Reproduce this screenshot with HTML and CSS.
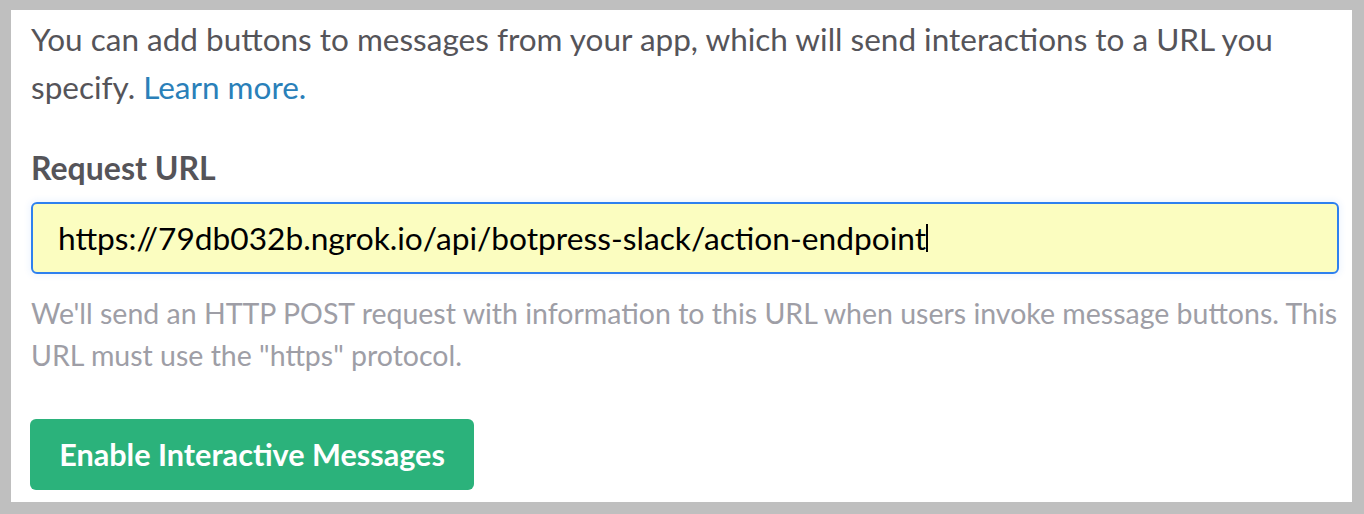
FILE: index.html
```html
<!DOCTYPE html>
<html>
<head>
<meta charset="utf-8">
<link rel="stylesheet" href="styles.css">
</head>
<body>
<div class="panel">
  <p class="intro">You can add buttons to messages from your app, which will send interactions to a URL you specify. <a class="link" href="#">Learn more.</a></p>
  <label class="label" for="url">Request URL</label>
  <div class="input"><span class="value">https://79db032b.ngrok.io/api/botpress-slack/action-endpoint</span><span class="caret"></span></div>
  <p class="help">We'll send an HTTP POST request with information to this URL when users invoke message buttons. This URL must use the "https" protocol.</p>
  <button class="btn">Enable Interactive Messages</button>
</div>
</body>
</html>
```
FILE: styles.css
```css
html, body {
  margin: 0;
  padding: 0;
}
body {
  background: #bfbfbf;
  width: 1364px;
  height: 514px;
  overflow: hidden;
  font-family: Lato, "Liberation Sans", sans-serif;
}
.panel {
  background: #ffffff;
  margin: 10px 12px 0 11px;
  height: 492px;
  box-sizing: border-box;
  padding: 5px 13px 0 20px;
  display: flex;
  flex-direction: column;
  align-items: flex-start;
}
.intro {
  margin: 0;
  font-size: 31.5px;
  line-height: 48px;
  color: #555459;
}
.link {
  color: #2a80b9;
  text-decoration: none;
}
.label {
  margin-top: 37px;
  font-size: 32px;
  line-height: 40px;
  font-weight: 700;
  color: #555459;
}
.input {
  margin-top: 14px;
  align-self: stretch;
  height: 72px;
  box-sizing: border-box;
  border: 2px solid #2d80ef;
  border-radius: 6px;
  background: #fbfdc0;
  box-shadow: 0 0 6px 2px rgba(45, 128, 239, 0.08);
  display: flex;
  align-items: center;
  padding-left: 25px;
  font-size: 31.7px;
  color: #000000;
}
.caret {
  display: inline-block;
  width: 2px;
  height: 28px;
  background: #000;
  margin-left: 0;
}
.help {
  margin: 18px 0 0 0;
  font-size: 28.5px;
  line-height: 42px;
  color: #9e9ea6;
}
.btn {
  margin-top: 43px;
  height: 71px;
  width: 444px;
  margin-left: -1px;
  border: none;
  border-radius: 6px;
  background: #2bb27b;
  color: #ffffff;
  font-family: Lato, "Liberation Sans", sans-serif;
  font-weight: 700;
  font-size: 30.6px;
  padding: 0;
}
```
